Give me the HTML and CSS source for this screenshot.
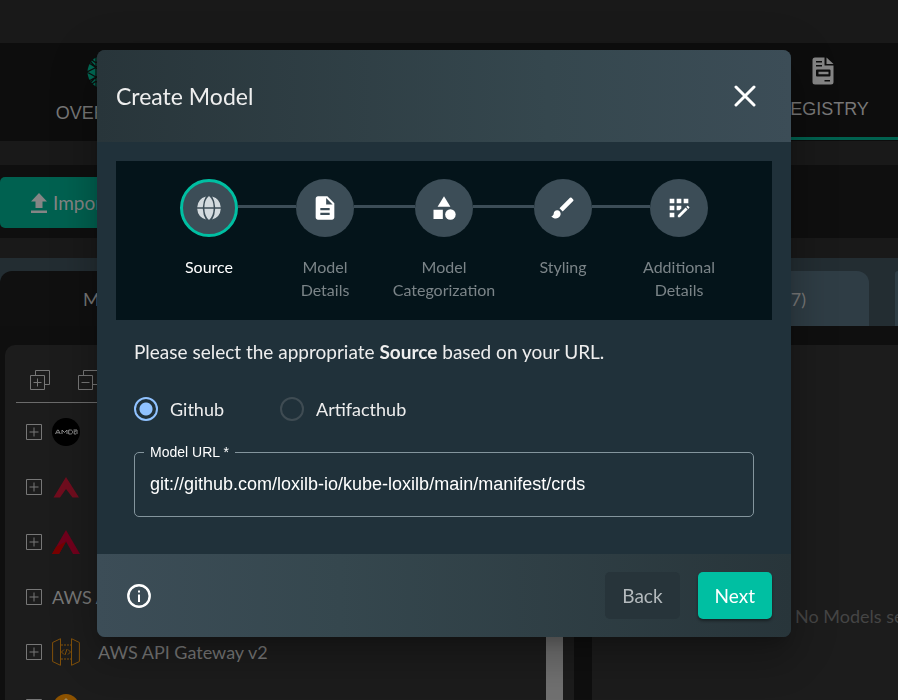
FILE: index.html
```html
<!DOCTYPE html>
<html lang="en">
<head>
<meta charset="utf-8">
<title>Create Model</title>
<link rel="stylesheet" href="styles.css">
</head>
<body>
<svg class="defs" aria-hidden="true">
  <symbol id="plus-box" viewBox="0 0 16 16"><path d="M.5.5h15v15H.5zM8 3.500v9M3.500 8h9" fill="none" stroke="currentColor"/></symbol>
</svg>

<div class="page">
  <nav class="nav">
    <a class="nav-item" href="#overview">
      <svg width="34" height="34" viewBox="0 0 34 34"><circle cx="17" cy="17" r="16.500" fill="#006b55"/><path d="M9 0v34M17 0v34M0 17l9-4.500 8-4.500M0 17l9 5 8 4M2 8l7 4.500 8 5M2 26l7-4 8-4M9 12.500L3 6M9 22l-6 6M5 5l4 3 8-6M5 29l4-3 8 6" fill="none" stroke="#0d0d0d" stroke-width="1.200"/></svg>
      <span>OVERVIEW</span>
    </a>
    <a class="nav-item nav-item-active" href="#registry">
      <svg width="22" height="28" viewBox="0 0 22 28"><path fill="#858585" fill-rule="evenodd" d="M3 .5h9.500v8h9V25a2.500 2.500 0 0 1-2.500 2.500H3A2.500 2.500 0 0 1 .5 25V3A2.500 2.500 0 0 1 3 .5zM4 4v1.500h6V4zm0 4v1.500h6V8zm1 4.500a1 1 0 0 0-1 1v5a1 1 0 0 0 1 1h12.500a1 1 0 0 0 1-1v-5a1 1 0 0 0-1-1zm1.500 2.200h10v2.600h-10zM12.500 23v1.500H18V23z"/><path fill="#858585" d="M14.500.5l7 6.500h-7z"/></svg>
      <span>REGISTRY</span>
    </a>
  </nav>

  <div class="toolbar">
    <button class="import" type="button">
      <svg width="18" height="20" viewBox="0 0 18 20"><path d="M9 0l8 8.500h-4.500V15h-7V8.500H1zM1 17.500h16V20H1z" fill="currentColor"/></svg>
      Import
    </button>
  </div>

  <div class="tabs">
    <button class="tab tab-active" type="button">Models (317)</button>
    <button class="tab" type="button">Components (5257)</button>
    <button class="tab tab-edge" type="button" aria-label="Relationships"></button>
  </div>

  <main class="content">
    <section class="panel tree">
      <div class="tree-tools">
        <svg width="20" height="20" viewBox="0 0 20 20"><path d="M.5 5.500h14v14H.5zM5.500 5.500v-5h14v14h-5M7.500 8.500v8M3.500 12.500h8" fill="none" stroke="currentColor"/></svg>
        <svg width="20" height="20" viewBox="0 0 20 20"><path d="M.5 5.500h14v14H.5zM5.500 5.500v-5h14v14h-5M3.500 12.500h8" fill="none" stroke="currentColor"/></svg>
      </div>
      <ul class="rows">
        <li><svg class="box"><use href="#plus-box"/></svg>
          <svg class="logo" viewBox="0 0 28 28"><circle cx="14" cy="14" r="14" fill="#000"/><path d="M3.500 16l2-4h.8l2 4M4.500 14.800h3M10 16v-4l2.500 2.500L15 12v4M16.700 12v4h2c2.500 0 2.500-4 0-4zM21.500 12H25v4M24 13.200h-1.800V16h2" fill="none" stroke="#8a8a8a"/></svg></li>
        <li><svg class="box"><use href="#plus-box"/></svg>
          <svg class="logo" viewBox="0 0 28 28"><path d="M14 4l13 20.500h-6.500L14 16l-6 8.500H1.500z" fill="#700d1e"/></svg></li>
        <li><svg class="box"><use href="#plus-box"/></svg>
          <svg class="logo" viewBox="0 0 28 28"><path d="M14 2l14 24h-7l-7-12.500L7 26H0z" fill="#70001c"/><path d="M14 13.500L7 26H0l4-7z" fill="#780000"/></svg></li>
        <li><svg class="box"><use href="#plus-box"/></svg><span>AWS Amplify</span></li>
        <li><svg class="box"><use href="#plus-box"/></svg>
          <svg class="logo" viewBox="0 0 28 28" fill="none" stroke="#80500a"><path d="M8.500.7v26.600L.6 23.500v-19zM19.500.7v26.600l7.900-3.800v-19z"/><path d="M9 7h10M9 21h10" stroke-dasharray="2 1"/><path d="M12 11.500L9.500 14l2.500 2.500M16 11.500l2.500 2.500-2.500 2.500M15 11l-2 6"/></svg>
          <span class="named">AWS API Gateway v2</span></li>
        <li><svg class="box"><use href="#plus-box"/></svg>
          <svg class="logo" viewBox="0 0 28 28"><circle cx="14" cy="14" r="13" fill="#8c5200"/><path d="M14 5l3 3h-2v5h-2V8h-2z" fill="#a08a60"/></svg></li>
      </ul>
      <div class="scrollbar"></div>
    </section>
    <section class="panel detail"><p>No Models selected</p></section>
  </main>
</div>

<div class="overlay">
  <form class="dialog" role="dialog" aria-labelledby="dialog-title">
    <header class="dialog-head">
      <h2 id="dialog-title">Create Model</h2>
      <button class="icon-button" type="button" aria-label="Close">
        <svg width="22" height="22" viewBox="0 0 22 22"><path d="M2 2l18 18M20 2L2 20" stroke="#fff" stroke-width="3" stroke-linecap="round"/></svg>
      </button>
    </header>

    <div class="dialog-body">
      <ol class="stepper">
        <li class="step step-active">
          <div class="step-line"><span class="dot">
            <svg width="24" height="24" viewBox="0 0 24 24" fill="#d3dade"><path d="M8.800 0.500Q6 5 5.800 11.200H.2A12 12 0 0 1 8.800.5zM15.200.5Q18 5 18.200 11.200h5.600A12 12 0 0 0 15.200.5zM.2 12.800h5.600Q6 19 8.800 23.500A12 12 0 0 1 .2 12.800zM23.800 12.800h-5.600Q18 19 15.200 23.500A12 12 0 0 0 23.800 12.800zM7.400 11.200Q7.600 3.500 12 0q4.400 3.500 4.600 11.200zM7.400 12.800Q7.600 20.500 12 24q4.400-3.500 4.600-11.200z"/></svg>
          </span></div>
          <span>Source</span>
        </li>
        <li class="step">
          <div class="step-line"><span class="dot">
            <svg width="28" height="28" viewBox="0 0 24 24" fill="#fff"><path d="M14 2H6c-1.100 0-1.990.9-1.990 2L4 20c0 1.100.89 2 1.990 2H18c1.100 0 2-.9 2-2V8l-6-6zm2 16H8v-2h8v2zm0-4H8v-2h8v2zm-3-5V3.500L18.500 9H13z"/></svg>
          </span></div>
          <span>Model<br>Details</span>
        </li>
        <li class="step">
          <div class="step-line"><span class="dot">
            <svg width="28" height="28" viewBox="0 0 24 24" fill="#fff"><path d="M12 2l-5.500 9h11z"/><circle cx="17.500" cy="17.500" r="4.500"/><path d="M3 13.500h8v8H3z"/></svg>
          </span></div>
          <span>Model<br>Categorization</span>
        </li>
        <li class="step">
          <div class="step-line"><span class="dot">
            <svg width="28" height="28" viewBox="0 0 24 24" fill="#fff"><path d="M7 14c-1.660 0-3 1.340-3 3 0 1.310-1.160 2-2 2 .92 1.220 2.490 2 4 2 2.210 0 4-1.790 4-4 0-1.660-1.340-3-3-3zm13.710-9.370l-1.340-1.340a.996.996 0 0 0-1.410 0L9 12.250 11.750 15l8.960-8.960a.996.996 0 0 0 0-1.410z"/></svg>
          </span></div>
          <span>Styling</span>
        </li>
        <li class="step">
          <div class="step-line"><span class="dot">
            <svg width="28" height="28" viewBox="0 0 24 24" fill="#fff"><path d="M10 4h4v4h-4zM4 16h4v4H4zM4 10h4v4H4zM4 4h4v4H4zM14 12.420V10h-4v4h2.420zM20.880 11.290l-1.170-1.170c-.16-.16-.42-.16-.58 0l-.88.88L20 12.750l.88-.88c.16-.16.16-.42 0-.58zM11 18.250V20h1.750l6.670-6.670-1.750-1.750zM16 4h4v4h-4z"/></svg>
          </span></div>
          <span>Additional<br>Details</span>
        </li>
      </ol>

      <div class="fields">
        <p class="prompt">Please select the appropriate <strong>Source</strong> based on your URL.</p>
        <div class="radios">
          <label><input type="radio" name="source" checked>Github</label>
          <label><input type="radio" name="source">Artifacthub</label>
        </div>
        <fieldset class="url">
          <legend><label for="model-url">Model URL *</label></legend>
          <input id="model-url" type="text" value="git://github.com/loxilb-io/kube-loxilb/main/manifest/crds">
        </fieldset>
      </div>
    </div>

    <footer class="dialog-foot">
      <button class="icon-button" type="button" aria-label="Information">
        <svg width="24" height="24" viewBox="0 0 24 24"><circle cx="12" cy="12" r="10.700" fill="none" stroke="#fff" stroke-width="2.400"/><path d="M11 10.500h2V18h-2zM11 6.500h2v2h-2z" fill="#fff"/></svg>
      </button>
      <div class="actions">
        <button class="button" type="button">Back</button>
        <button class="button button-primary" type="button">Next</button>
      </div>
    </footer>
  </form>
</div>
</body>
</html>
```
FILE: styles.css
```css
* { box-sizing: border-box; }

body {
  margin: 0;
  height: 100vh;
  overflow: hidden;
  background: #191919;
  color: #777;
  font-family: Lato, "Liberation Sans", sans-serif;
  font-size: 18px;
}

button { border: 0; font: inherit; }
ul, ol { margin: 0; padding: 0; list-style: none; }
svg { display: block; flex: none; }
.defs { display: none; }

.page { display: flex; flex-direction: column; height: 100vh; padding-top: 43px; }

.nav {
  display: flex;
  justify-content: space-between;
  height: 98px;
  padding-left: 26px;
  background: #0d0d0d;
}
.nav-item {
  display: flex;
  flex-direction: column;
  align-items: center;
  gap: 14px;
  width: 156px;
  padding-top: 12px;
  color: #777;
  font: 18px/20px "Liberation Sans", sans-serif;
  text-decoration: none;
}
.nav-item-active {
  width: 150px;
  height: 97px;
  border-bottom: 3px solid #00614f;
  padding-top: 14px;
}

.toolbar {
  height: 73px;
  margin: 24px 0 20px;
  padding: 12px 0;
  background: #0f0f0f;
}
.import {
  display: flex;
  align-items: center;
  gap: 5px;
  height: 51px;
  padding: 0 30px;
  border-radius: 5px;
  background: #006150;
  color: #858585;
  font-size: 19px;
}

.tabs {
  display: grid;
  grid-template-columns: 408fr 435fr 3px;
  flex: none;
  column-gap: 26px;
  height: 68px;
  padding-top: 13px;
  background: #232d32;
}
.tab {
  border-radius: 12px 12px 0 0;
  padding: 0 63px;
  background: #2f3d45;
  color: #777;
  text-align: right;
}
.tab-active { padding-left: 83px; background: #101010; text-align: left; }
.tab-edge { padding: 0; border-radius: 3px 0 0 0; }

.content {
  display: grid;
  grid-template-columns: 569fr 306fr;
  column-gap: 18px;
  flex: 1;
  min-height: 0;
  padding: 19px 0 0 5px;
  background: #0f0f0f;
}
.panel { overflow: hidden; border-radius: 10px 0 0 0; background: #1c1c1c; }
.tree { display: grid; grid-template-columns: 1fr 17px; grid-template-rows: 58px 1fr; padding: 0 11px; }
.tree-tools {
  display: flex;
  gap: 28px;
  padding: 25px 14px 0;
  border-bottom: 1px solid #6b6b6b;
}
.scrollbar { grid-column: 2; grid-row: 1 / 3; background: #707070; }
.rows { padding-top: 1px; }
.rows li {
  display: flex;
  align-items: center;
  gap: 10px;
  height: 55px;
  padding-left: 10px;
}
.box { width: 16px; height: 16px; }
.logo { width: 28px; height: 28px; }
.named { padding-left: 8px; }
.detail { padding: 260px 0 0 203px; border-radius: 0; }
.detail p { margin: 0; color: #454545; white-space: nowrap; }

.overlay { position: fixed; inset: 0; padding: 50px 107px 0 97px; }
.dialog {
  overflow: hidden;
  border-radius: 8px;
  background: #20313a;
  color: #fff;
  box-shadow: 0 11px 15px -7px rgba(0, 0, 0, .2), 0 24px 38px 3px rgba(0, 0, 0, .14), 0 9px 46px 8px rgba(0, 0, 0, .12);
}
.dialog-head, .dialog-foot { display: flex; align-items: center; justify-content: space-between; }
.dialog-head {
  height: 92px;
  padding: 0 30px 0 19px;
  background: linear-gradient(90deg, #28353a, #35474e 65%, #3c4d57);
}
.dialog-head h2 { margin: 0; font-size: 23px; font-weight: 400; color: #eee; }
.icon-button { padding: 5px; background: none; }

.dialog-body { padding: 19px 19px 37px; }
.stepper {
  display: grid;
  grid-template-columns: 114fr 118fr 120fr 118fr 114fr;
  padding: 18px 36px 19px;
  background: #04141a;
}
.step {
  display: flex;
  flex-direction: column;
  gap: 18px;
  color: #7b8488;
  font-size: 16px;
  line-height: 23px;
  text-align: center;
}
.step-active { color: #fff; }
.step-line { display: flex; align-items: center; }
.step-line::before, .step-line::after { content: ""; flex: 1; height: 3px; margin-bottom: 3px; background: #3c4d57; }
.step:first-child .step-line::before, .step:last-child .step-line::after { background: none; }
.dot {
  display: grid;
  place-items: center;
  width: 58px;
  height: 58px;
  border-radius: 50%;
  background: #3c4d57;
}
.step-active .dot { border: 3px solid #00bfa2; }

.fields { padding: 18px 18px 0; }
.prompt { margin: 0; font-size: 19px; line-height: 28px; color: #eee; }
.radios { display: flex; gap: 56px; padding: 28px 0 20px; }
.radios label { display: flex; align-items: center; gap: 12px; height: 30px; color: #eee; }
.radios input {
  appearance: none;
  width: 24px;
  height: 24px;
  margin: 0;
  border: 2px solid #3f4c53;
  border-radius: 50%;
}
.radios input:checked {
  border-color: #90c2ff;
  background: radial-gradient(circle, #90c2ff 6px, transparent 7px);
}

.url {
  min-width: 0;
  margin: 0;
  padding: 0 15px 17px;
  border: 1px solid #84959d;
  border-radius: 5px;
  font-family: "Liberation Sans", sans-serif;
}
.url legend { margin-left: -6px; padding: 0 6px; font-size: 14px; line-height: 16px; }
.url label { display: block; }
.url input {
  display: block;
  width: 100%;
  height: 30px;
  margin-top: 9px;
  padding: 0;
  border: 0;
  outline: 0;
  background: none;
  color: #fff;
  font: 18px/30px "Liberation Sans", sans-serif;
}

.dialog-foot {
  height: 83px;
  padding: 0 19px 0 25px;
  background: linear-gradient(90deg, #3c4d57, #35474e 35%, #28353a);
}
.actions { display: flex; gap: 18px; }
.button {
  height: 47px;
  padding: 0 17px;
  border-radius: 5px;
  background: #27343a;
  color: #b4babd;
  font-size: 19px;
}
.button-primary { background: #00bfa2; color: #fff; box-shadow: 0 2px 3px rgba(0, 0, 0, .4); }
```
